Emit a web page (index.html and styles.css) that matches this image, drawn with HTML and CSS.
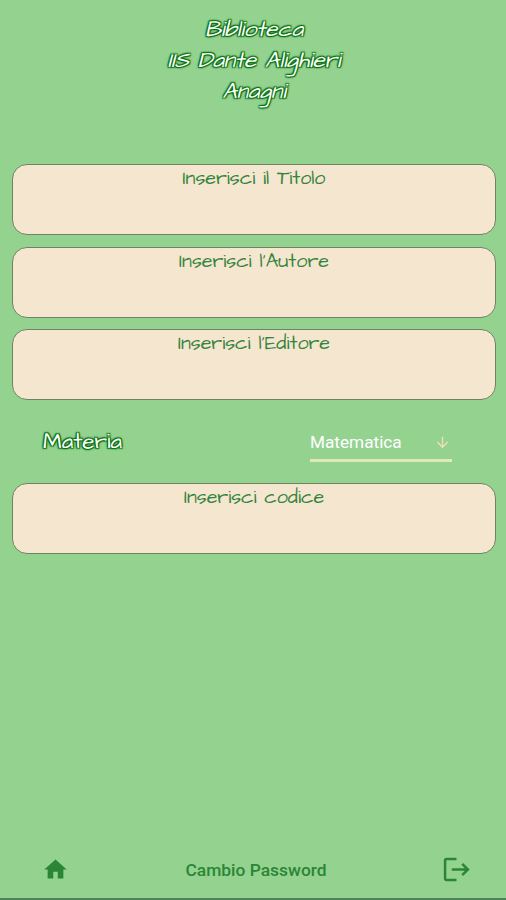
FILE: index.html
```html
<!DOCTYPE html>
<html lang="it">
<head>
  <meta charset="utf-8">
  <title>Biblioteca</title>
  <link rel="stylesheet" href="styles.css">
</head>
<body>
  <header class="header">
    <h1>Biblioteca<br>IIS Dante Alighieri<br>Anagni</h1>
  </header>

  <main class="form">
    <div class="field"><span class="hint">Inserisci il Titolo</span></div>
    <div class="field"><span class="hint">Inserisci l'Autore</span></div>
    <div class="field"><span class="hint">Inserisci l'Editore</span></div>

    <div class="subject-row">
      <span class="subject-label">Materia</span>
      <div class="dropdown">
        <span>Matematica</span>
        <svg class="arrow" viewBox="0 0 24 24"><path d="M20 12l-1.41-1.41L13 16.17V4h-2v12.17l-5.58-5.59L4 12l8 8 8-8z"/></svg>
      </div>
    </div>

    <div class="field"><span class="hint">Inserisci codice</span></div>
  </main>

  <nav class="footer">
    <svg class="icon-home" viewBox="0 0 24 24"><path d="M10 20v-6h4v6h5v-8h3L12 3 2 12h3v8z"/></svg>
    <span class="password">Cambio Password</span>
    <svg class="icon-exit" viewBox="0 0 26 24"><path d="M13 2H3.5Q2 2 2 3.5v17Q2 22 3.5 22H13M8.5 12H24M18.5 6.5L24 12l-5.5 5.5"/></svg>
  </nav>
</body>
</html>
```

FILE: styles.css
```css
* {
  box-sizing: border-box;
}

body {
  display: flex;
  flex-direction: column;
  height: 900px;
  margin: 0;
  background: #94d290;
  border-bottom: 2px solid #4d8358;
  font-family: Roboto, sans-serif;
}

.header {
  height: 164px;
  padding: 14px 0 0 2px;
}

.header h1 {
  margin: 0;
  font-family: "Architects Daughter", Lato, sans-serif;
  font-size: 22.4px;
  font-style: italic;
  font-weight: 400;
  line-height: 31px;
  text-align: center;
}

.header h1,
.subject-label {
  color: #fff;
  text-shadow: 1px 1px 1px #08700f, -1px -1px 1px #08700f, 1px -1px 1px #08700f, -1px 1px 1px #08700f, 0 0 3px #08700f;
}

.form {
  flex: 1;
  padding: 0 10px 0 12px;
}

.field {
  height: 71px;
  margin-bottom: 11.5px;
  padding-top: 1px;
  background: #f5e7cf;
  border: 1px solid #6f8262;
  border-radius: 15px;
  text-align: center;
}

.hint {
  font-family: "Architects Daughter", Lato, sans-serif;
  font-size: 19.7px;
  line-height: 25px;
  color: #36843f;
}

.subject-row {
  display: flex;
  justify-content: space-between;
  height: 71px;
  padding: 14px 44px 0 31px;
}

.subject-label {
  font-family: "Architects Daughter", Lato, sans-serif;
  font-size: 22.6px;
  line-height: 32px;
}

.dropdown {
  display: flex;
  align-items: center;
  justify-content: space-between;
  width: 142px;
  height: 36px;
  padding-right: 1px;
  border-bottom: 3px solid #dfe8b8;
  font-size: 17.2px;
  color: #fff;
}

.arrow {
  width: 17px;
  height: 17px;
  fill: #efdfb9;
}

.footer {
  display: flex;
  align-items: center;
  justify-content: space-between;
  height: 58px;
  padding: 0 36px 0 42px;
  color: #2b8536;
}

.icon-home {
  width: 27px;
  height: 27px;
  fill: currentColor;
}

.password {
  padding-top: 1px;
  font-size: 17.4px;
  font-weight: 500;
}

.icon-exit {
  width: 27px;
  height: 25px;
  fill: none;
  stroke: currentColor;
  stroke-width: 2.4;
}
```
